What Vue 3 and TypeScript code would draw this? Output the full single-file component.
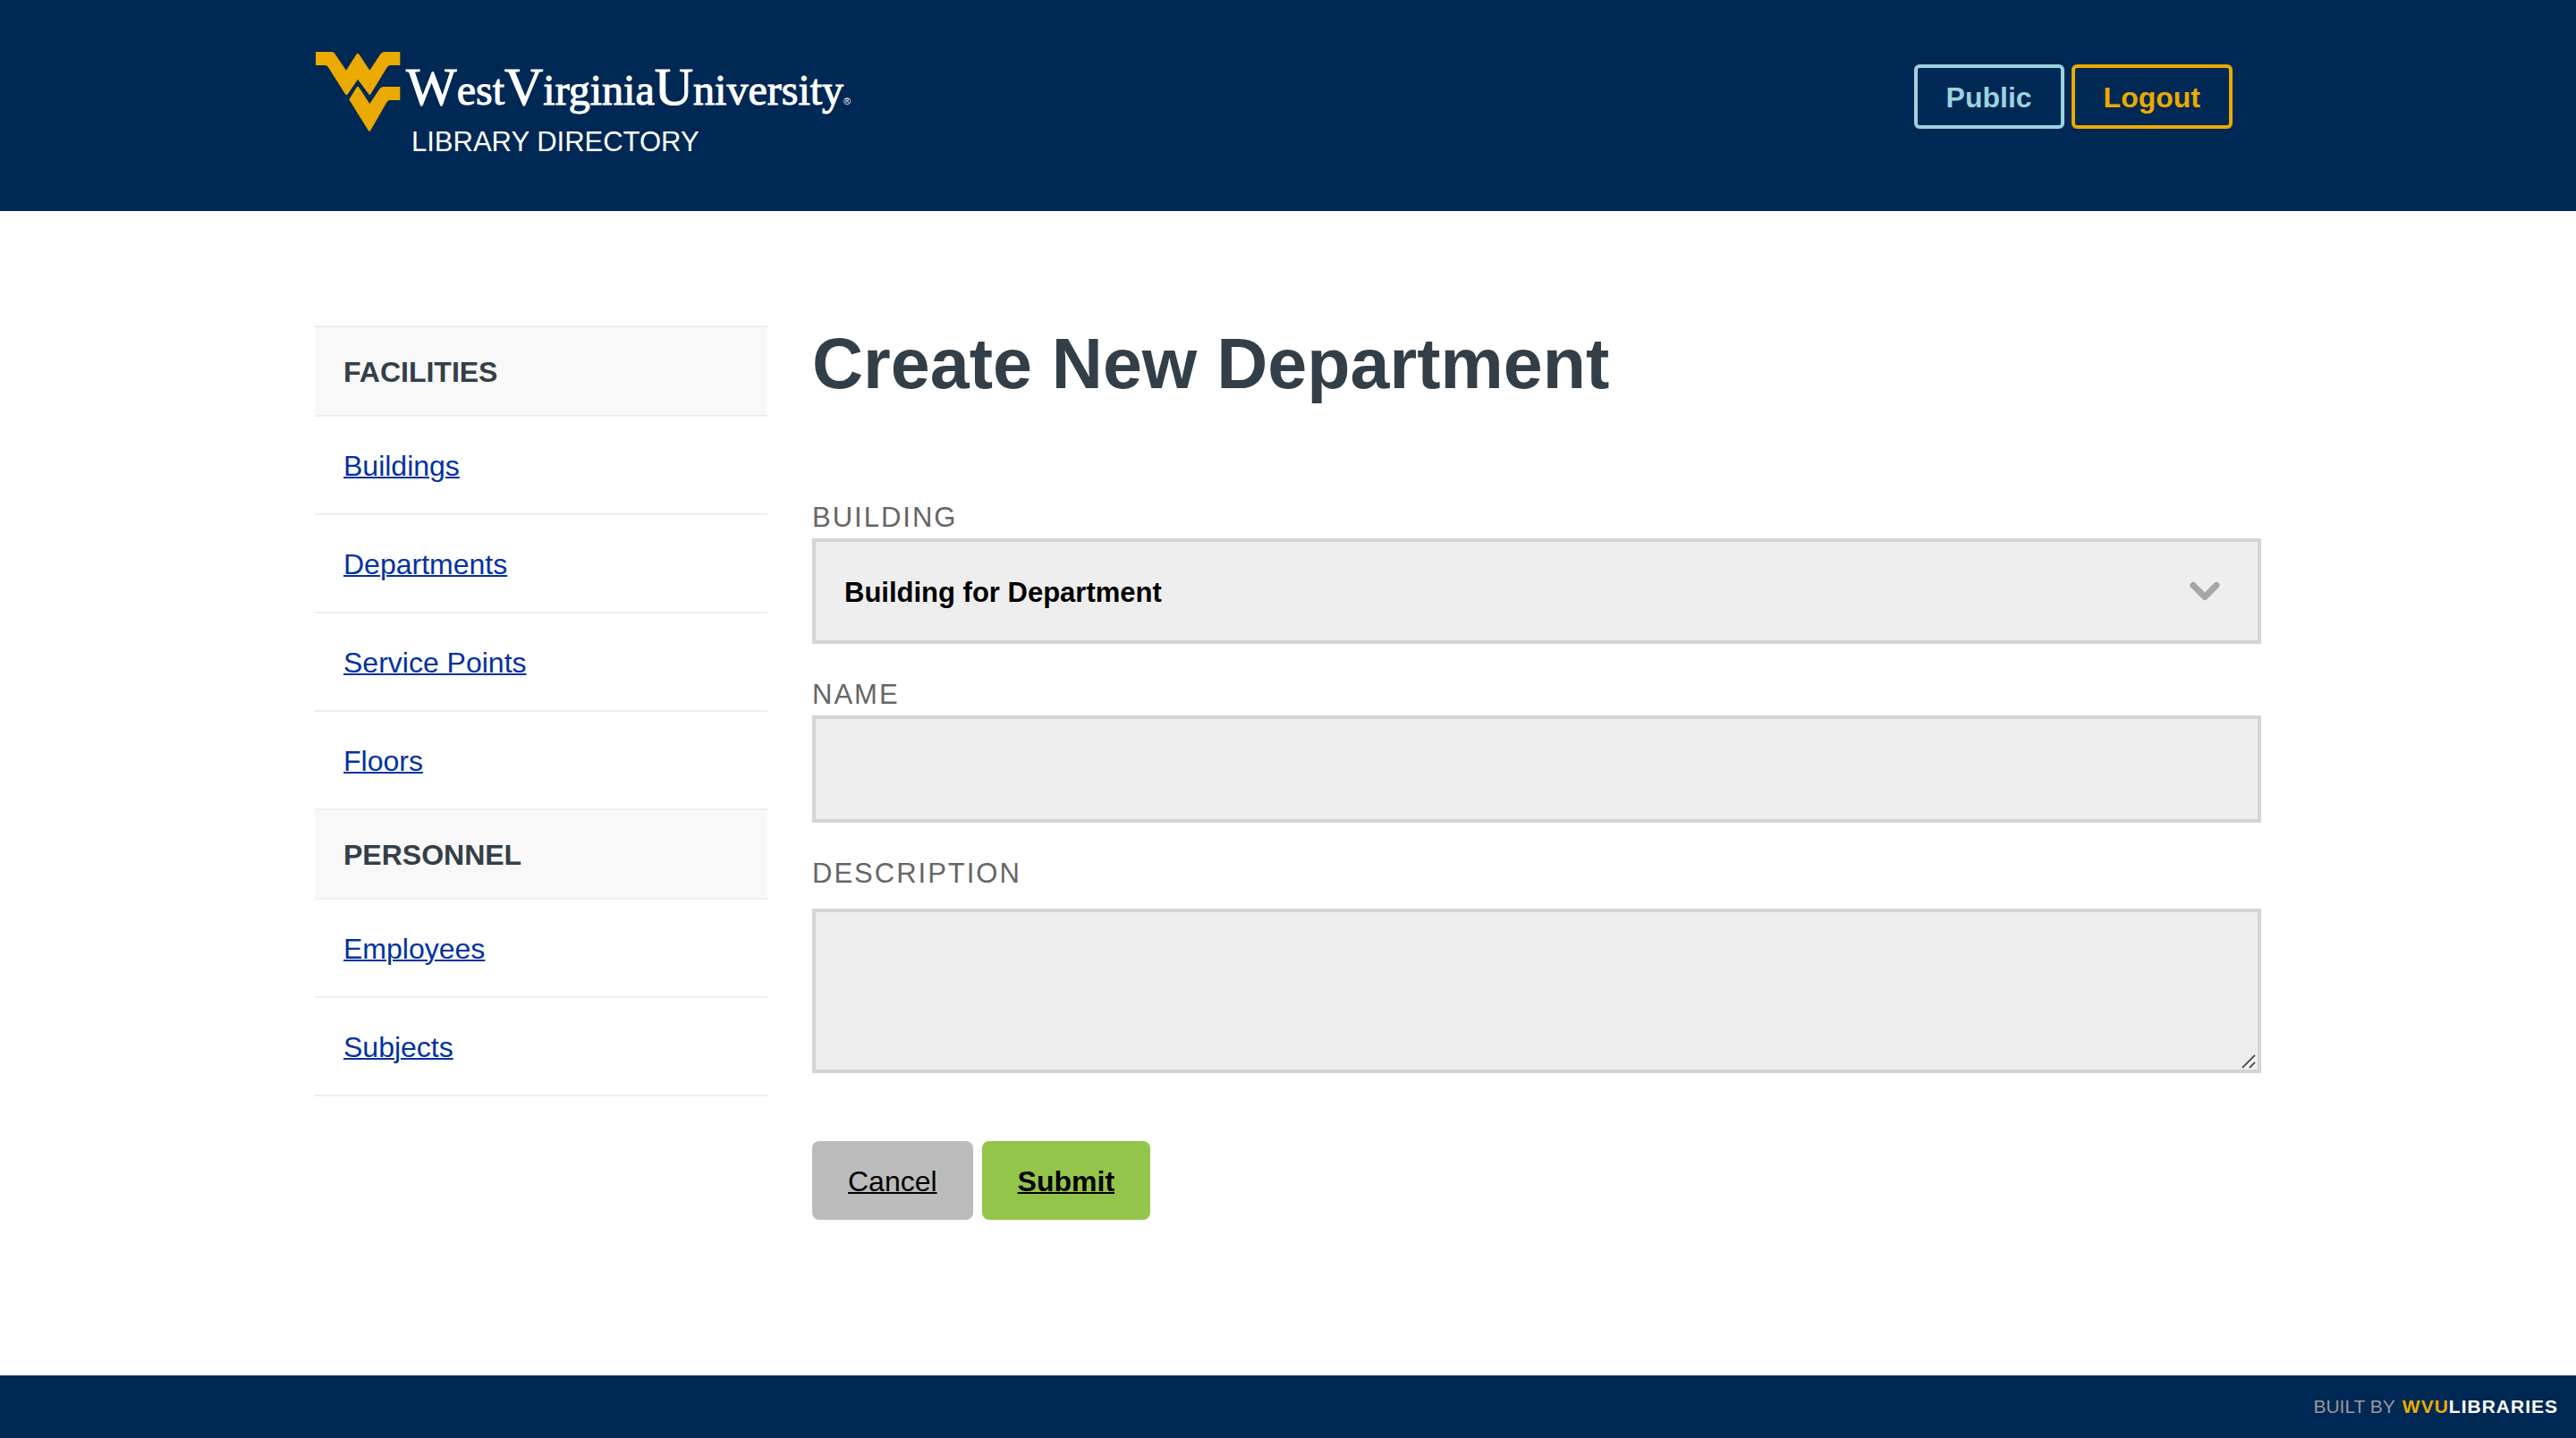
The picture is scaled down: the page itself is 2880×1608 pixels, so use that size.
<script setup lang="ts">
import { ref } from 'vue'

interface NavGroup {
  title: string
  links: string[]
}

const groups: NavGroup[] = [
  { title: 'FACILITIES', links: ['Buildings', 'Departments', 'Service Points', 'Floors'] },
  { title: 'PERSONNEL', links: ['Employees', 'Subjects'] },
]

const building = ref('')
const name = ref('')
const description = ref('')

function reset(): void {
  building.value = ''
  name.value = ''
  description.value = ''
}
</script>

<template>
  <div class="page">
    <header class="masthead">
      <div class="container masthead-row">
        <a class="brand" href="#">
          <svg class="mark" viewBox="0 0 96 90" width="96" height="90" aria-hidden="true">
            <path
              d="M1 0H19.5Q21.500 0 23 3L35 20.700L46.300 3Q48 .5 49.700 3L61.300 20.700L73 3Q75 0 77.500 0H95.300V15H84.500Q82 15 80.300 18L62.500 47Q61.300 49 60 47L48 30.700L37 47Q35 49.500 33.500 46.500L15.500 18Q14 15 11.500 15H1Z"
            />
            <path
              d="M38.300 53.300L46.500 40Q48 37.700 49.500 40L61.300 58L72 42Q73.800 39 76.500 39H95.300V54H84Q81.500 54 80 57L62.500 87.500Q61 90 59.500 87.500Z"
            />
          </svg>
          <span class="brand-text">
            <span class="wordmark"
              ><span class="initial">W</span>est<span class="initial">V</span>irginia<span class="initial">U</span
              >niversity<span class="registered">®</span></span
            >
            <span class="subtitle">LIBRARY DIRECTORY</span>
          </span>
        </a>
        <div class="session">
          <button type="button" class="outline public">Public</button>
          <button type="button" class="outline logout">Logout</button>
        </div>
      </div>
    </header>

    <main class="container content">
      <nav class="sidebar">
        <section v-for="group in groups" :key="group.title">
          <h2>{{ group.title }}</h2>
          <ul>
            <li v-for="link in group.links" :key="link">
              <a href="#">{{ link }}</a>
            </li>
          </ul>
        </section>
      </nav>

      <form class="form" @submit.prevent>
        <h1>Create New Department</h1>

        <div class="field">
          <label for="building">BUILDING</label>
          <div class="control">
            <select id="building" v-model="building">
              <option value="">Building for Department</option>
            </select>
            <svg class="chevron" viewBox="0 0 34 22" width="34" height="22" aria-hidden="true">
              <path d="M4 4.500L17 17.500L30 4.500" />
            </svg>
          </div>
        </div>

        <div class="field">
          <label for="name">NAME</label>
          <input id="name" v-model="name" type="text" />
        </div>

        <div class="field">
          <label for="description">DESCRIPTION</label>
          <div class="control">
            <textarea id="description" v-model="description"></textarea>
            <svg class="grip" viewBox="0 0 16 16" width="16" height="16" aria-hidden="true">
              <path class="grip-light" d="M3 15.500L15.500 3M11 15.500L15.500 11" />
              <path class="grip-dark" d="M1 15L15 1M9 15L15 9" />
            </svg>
          </div>
        </div>

        <div class="actions">
          <button type="button" class="cancel" @click="reset">Cancel</button>
          <button type="submit" class="submit">Submit</button>
        </div>
      </form>
    </main>

    <footer class="footer">
      <span class="built">BUILT BY</span>
      <a href="#"><span class="gold">WVU</span>LIBRARIES</a>
    </footer>
  </div>
</template>

<style>
body {
  margin: 0;
}
</style>

<style scoped>
* {
  box-sizing: border-box;
}

.page {
  display: flex;
  flex-direction: column;
  min-height: 100vh;
  background: #fff;
  color: #333f48;
  font-family: 'Liberation Sans', Helvetica, Arial, sans-serif;
  font-size: 32px;
}

.container {
  width: 100%;
  max-width: 2176px;
  margin: 0 auto;
}

.masthead {
  background: #002855;
}

.masthead-row {
  display: flex;
  justify-content: space-between;
  align-items: flex-start;
  padding: 58px 32px 57px 0;
}

.brand {
  display: flex;
  gap: 6px;
  color: #fff;
  text-decoration: none;
}

.mark {
  fill: #eaaa00;
}

.brand-text {
  display: flex;
  flex-direction: column;
  gap: 8px;
  padding-top: 13px;
}

.wordmark {
  font-family: 'Liberation Serif', 'Times New Roman', serif;
  font-size: 48px;
  line-height: 60px;
  white-space: nowrap;
  -webkit-text-stroke: 1px #fff;
}

.initial {
  font-size: 60px;
  line-height: 0;
}

.registered {
  font-family: 'Liberation Sans', Arial, sans-serif;
  font-size: 11px;
  line-height: 0;
  -webkit-text-stroke: 0;
}

.subtitle {
  padding-left: 6px;
  font-size: 31px;
  line-height: 40px;
}

.session {
  display: flex;
  gap: 8px;
  padding-top: 14px;
}

button {
  font-family: inherit;
  font-size: 32px;
  cursor: pointer;
}

.outline {
  height: 72px;
  padding: 2px 32px 0;
  border: 4px solid currentColor;
  border-radius: 6px;
  background: transparent;
  font-weight: 700;
}

.public {
  color: #9bd3dd;
}

.logout {
  color: #eaaa00;
}

.content {
  flex: 1;
  display: grid;
  grid-template-columns: 506px minmax(0, 1fr);
  gap: 50px;
  align-items: start;
  padding: 128px 0;
}

.sidebar {
  border-top: 2px solid #eee;
}

.sidebar h2 {
  margin: 0;
  padding: 2px 32px 0;
  border-bottom: 2px solid #eee;
  background: #f8f8f8;
  font-size: 32px;
  line-height: 96px;
}

.sidebar ul {
  margin: 0;
  padding: 0;
  list-style: none;
}

.sidebar li {
  padding: 2px 32px 0;
  border-bottom: 2px solid #eee;
  line-height: 106px;
}

.sidebar a {
  color: #0032a0;
  text-decoration-thickness: 2px;
}

h1 {
  margin: 0 0 108px;
  font-size: 79px;
  line-height: 86px;
}

.field {
  margin-bottom: 36px;
}

label {
  display: block;
  padding-bottom: 2px;
  color: #666;
  font-size: 31px;
  line-height: 42px;
  letter-spacing: 2px;
}

.control {
  position: relative;
}

.chevron {
  position: absolute;
  top: 48px;
  right: 46px;
  fill: none;
  stroke: #a6a6a6;
  stroke-width: 7px;
  stroke-linecap: round;
  stroke-linejoin: round;
  pointer-events: none;
}

select,
input,
textarea {
  display: block;
  width: 100%;
  padding: 2px 32px 0;
  border: 4px solid #d4d4d4;
  border-radius: 0;
  background: #eee;
  color: #000;
  font-family: inherit;
  font-size: 31px;
}

select {
  height: 118px;
  appearance: none;
  font-weight: 700;
}

input {
  height: 120px;
}

textarea {
  height: 184px;
  margin-top: 16px;
  padding: 32px;
  resize: vertical;
}

textarea::-webkit-resizer {
  background: transparent;
}

.grip {
  position: absolute;
  right: 6px;
  bottom: 5px;
  fill: none;
  stroke-width: 2px;
  pointer-events: none;
}

.grip-light {
  stroke: #fff;
}

.grip-dark {
  stroke: #555;
}

.actions {
  display: flex;
  gap: 10px;
  padding-top: 40px;
}

.actions button {
  height: 88px;
  padding: 2px 40px 0;
  border: 0;
  border-radius: 8px;
  color: #000;
  text-decoration: underline;
  text-decoration-thickness: 2px;
}

.cancel {
  background: #bbb;
}

.actions .submit {
  background: #93c54b;
  font-weight: 700;
}

.footer {
  display: flex;
  justify-content: flex-end;
  gap: 8px;
  padding: 0 20px;
  background: #002855;
  font-size: 21px;
  line-height: 70px;
}

.built {
  color: #999;
}

.footer a {
  color: #fff;
  font-weight: 700;
  letter-spacing: 1px;
  text-decoration: none;
}

.gold {
  color: #eaaa00;
}
</style>
